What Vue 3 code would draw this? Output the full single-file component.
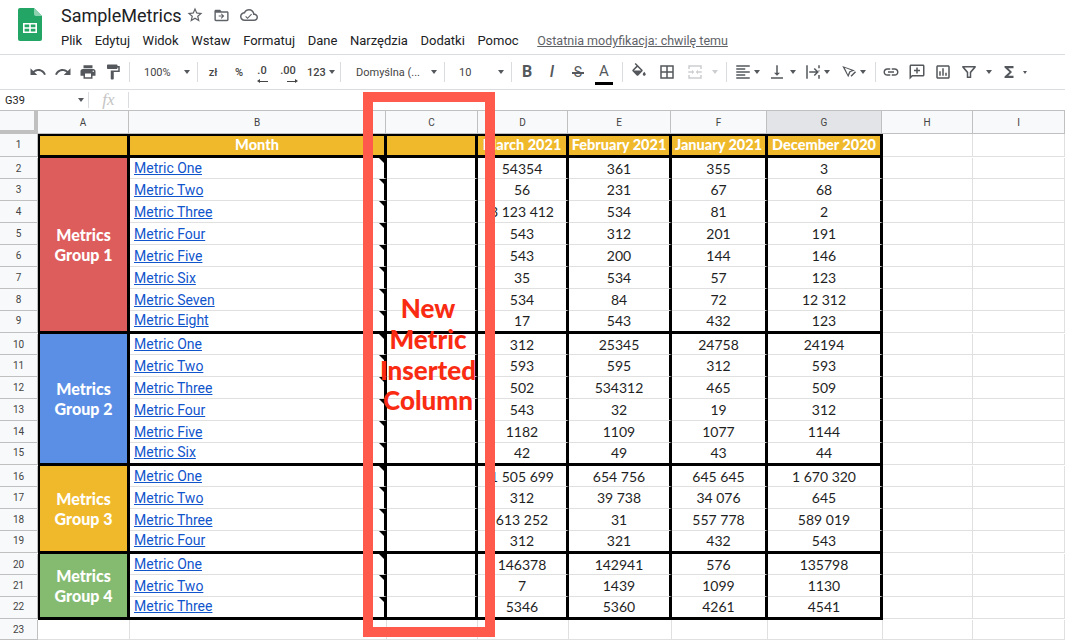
<script setup>
const P = {
  undo: 'M12.5 8c-2.65 0-5.05.99-6.9 2.6L2 7v9h9l-3.62-3.62c1.39-1.16 3.16-1.88 5.12-1.88 3.54 0 6.55 2.31 7.6 5.5l2.37-.78C21.08 11.03 17.15 8 12.5 8z',
  redo: 'M18.4 10.6C16.55 8.99 14.15 8 11.5 8c-4.65 0-8.58 3.03-9.96 7.22L3.9 16c1.05-3.19 4.05-5.5 7.6-5.5 1.95 0 3.73.72 5.12 1.88L13 16h9V7l-3.6 3.6z',
  print: 'M19 8H5c-1.66 0-3 1.34-3 3v6h4v4h12v-4h4v-6c0-1.66-1.34-3-3-3zm-3 11H8v-5h8v5zm3-7c-.55 0-1-.45-1-1s.45-1 1-1 1 .45 1 1-.45 1-1 1zm-1-9H6v4h12V3z',
  paint: 'M18 4V3c0-.55-.45-1-1-1H5c-.55 0-1 .45-1 1v4c0 .55.45 1 1 1h12c.55 0 1-.45 1-1V6h1v4H9v11c0 .55.45 1 1 1h2c.55 0 1-.45 1-1v-9h8V4h-3z',
  fill: 'M16.56 8.94L7.62 0 6.21 1.41l2.38 2.38-5.15 5.15c-.59.59-.59 1.54 0 2.12l5.5 5.5c.29.29.68.44 1.06.44s.77-.15 1.06-.44l5.5-5.5c.59-.58.59-1.53 0-2.12zM5.21 10L10 5.21 14.79 10H5.21zM19 11.5s-2 2.17-2 3.5c0 1.1.9 2 2 2s2-.9 2-2c0-1.33-2-3.5-2-3.5z',
  borders: 'M3 3v18h18V3H3zm8 16H5v-6h6v6zm0-8H5V5h6v6zm8 8h-6v-6h6v6zm0-8h-6V5h6v6z',
  merge: 'M3 3h18v5h-2V5H5v3H3zM3 16h2v3h14v-3h2v5H3zM3 11h5V9l3 3-3 3v-2H3zM21 11h-5V9l-3 3 3 3v-2h5z',
  align: 'M15 15H3v2h12v-2zm0-8H3v2h12V7zM3 13h18v-2H3v2zm0 8h18v-2H3v2zM3 3v2h18V3H3z',
  valign: 'M16 13h-3V3h-2v10H8l4 4 4-4zM4 19v2h16v-2H4z',
  wrap: 'M3 3h2v18H3zM19 3h2v4h-2zM19 10h2v1h-2zM19 16h2v5h-2zM7 11h9l-3-3 1.4-1.4 5.4 5.4-5.4 5.4L13 16l3-3H7z',
  rotate: 'M3 4l17 6-6 2-3 7zM6.4 6.4l4.2 9 1.9-4.5 3-1zM14 17l6-6 1.4 1.4-6 6z',
  link: 'M3.9 12c0-1.71 1.39-3.1 3.1-3.1h4V7H7c-2.76 0-5 2.24-5 5s2.24 5 5 5h4v-1.9H7c-1.71 0-3.1-1.39-3.1-3.1zM8 13h8v-2H8v2zm9-6h-4v1.9h4c1.71 0 3.1 1.39 3.1 3.1s-1.39 3.1-3.1 3.1h-4V17h4c2.76 0 5-2.24 5-5s-2.24-5-5-5z',
  comment: 'M20 2H4c-1.1 0-2 .9-2 2v18l4-4h14c1.1 0 2-.9 2-2V4c0-1.1-.9-2-2-2zm0 14H5.2L4 17.2V4h16v12zM11 6h2v3h3v2h-3v3h-2v-3H8V9h3z',
  chart: 'M19 3H5c-1.1 0-2 .9-2 2v14c0 1.1.9 2 2 2h14c1.1 0 2-.9 2-2V5c0-1.1-.9-2-2-2zm0 16H5V5h14v14zM7 11h2v6H7zM11 7h2v10h-2zM15 13h2v4h-2z',
  filter: 'M3 4h18v2l-6 7v7h-6v-7L3 6zm3 2l5 6v6h2v-6l5-6z',
  sigma: 'M18 4H6v2l6.5 6L6 18v2h12v-3h-7l5-5-5-5h7z',
}

const tools = [
  { w: 25, icon: 'undo' }, { w: 25, icon: 'redo' }, { w: 25, icon: 'print' }, { w: 25, icon: 'paint' },
  { sep: true, m: 4 },
  { w: 67, text: '100%', caret: true, pad: 14 },
  { sep: true },
  { w: 30, text: 'zł', bold: true }, { w: 22, text: '%', bold: true },
  { w: 24, dec: '.0', arrow: 'left' }, { w: 28, dec: '.00', arrow: 'right' },
  { w: 38, text: '123', caret: true, bold: true, g: 3 },
  { sep: true },
  { w: 103, text: 'Domyślna (...', caret: true, pad: 15 },
  { sep: true },
  { w: 66, text: '10', caret: true, pad: 14 },
  { sep: true },
  { w: 30, glyph: 'B', cls: 'g-b' }, { w: 20, glyph: 'I', cls: 'g-i' }, { w: 32, glyph: 'S', cls: 'g-s' }, { w: 20, glyph: 'A', cls: 'g-a' },
  { sep: true, m: 8 },
  { w: 32, icon: 'fill' }, { w: 23, icon: 'borders' }, { w: 48, icon: 'merge', off: true, caret: true, g: 7.5 },
  { sep: true },
  { w: 40, icon: 'align', caret: true, g: 2.5 }, { w: 30, icon: 'valign', caret: true, g: 3.5 },
  { w: 40, icon: 'wrap', caret: true, g: 2.5 }, { w: 32, icon: 'rotate', caret: true, g: 2 },
  { sep: true, m: 6 },
  { w: 30, icon: 'link' }, { w: 22, icon: 'comment' }, { w: 30, icon: 'chart' },
  { w: 36, icon: 'filter', caret: true, g: 7.5 }, { w: 39, icon: 'sigma', caret: true, small: true, g: 5 },
]

const menu = ['Plik', 'Edytuj', 'Widok', 'Wstaw', 'Formatuj', 'Dane', 'Narzędzia', 'Dodatki', 'Pomoc']
const colHeads = ['A', 'B', 'C', 'D', 'E', 'F', 'G', 'H', 'I']
const months = ['March 2021', 'February 2021', 'January 2021', 'December 2020']

const rows = [
  { n: 2, group: { cls: 'red', span: 8, a: 'Metrics', b: 'Group 1' }, m: 'Metric One', v: ['54354', '361', '355', '3'] },
  { n: 3, m: 'Metric Two', v: ['56', '231', '67', '68'] },
  { n: 4, m: 'Metric Three', v: ['3 123 412', '534', '81', '2'] },
  { n: 5, m: 'Metric Four', v: ['543', '312', '201', '191'] },
  { n: 6, m: 'Metric Five', v: ['543', '200', '144', '146'] },
  { n: 7, m: 'Metric Six', v: ['35', '534', '57', '123'] },
  { n: 8, m: 'Metric Seven', v: ['534', '84', '72', '12 312'] },
  { n: 9, end: true, m: 'Metric Eight', v: ['17', '543', '432', '123'] },
  { n: 10, group: { cls: 'blue', span: 6, a: 'Metrics', b: 'Group 2' }, m: 'Metric One', v: ['312', '25345', '24758', '24194'] },
  { n: 11, m: 'Metric Two', v: ['593', '595', '312', '593'] },
  { n: 12, m: 'Metric Three', v: ['502', '534312', '465', '509'] },
  { n: 13, m: 'Metric Four', v: ['543', '32', '19', '312'] },
  { n: 14, m: 'Metric Five', v: ['1182', '1109', '1077', '1144'] },
  { n: 15, end: true, m: 'Metric Six', v: ['42', '49', '43', '44'] },
  { n: 16, group: { cls: 'yellow', span: 4, a: 'Metrics', b: 'Group 3' }, m: 'Metric One', v: ['1 505 699', '654 756', '645 645', '1 670 320'] },
  { n: 17, m: 'Metric Two', v: ['312', '39 738', '34 076', '645'] },
  { n: 18, m: 'Metric Three', v: ['613 252', '31', '557 778', '589 019'] },
  { n: 19, end: true, m: 'Metric Four', v: ['312', '321', '432', '543'] },
  { n: 20, group: { cls: 'green', span: 3, a: 'Metrics', b: 'Group 4' }, m: 'Metric One', v: ['146378', '142941', '576', '135798'] },
  { n: 21, m: 'Metric Two', v: ['7', '1439', '1099', '1130'] },
  { n: 22, end: true, m: 'Metric Three', v: ['5346', '5360', '4261', '4541'] },
]
const blanks = [1, 2, 3, 4, 5, 6, 7, 8, 9]
</script>

<template>
  <div class="app">
    <header class="top">
      <svg class="logo" viewBox="0 0 24 33" width="24" height="33">
        <path d="M2 0h14l8 8v23a2 2 0 0 1-2 2H2a2 2 0 0 1-2-2V2a2 2 0 0 1 2-2z" fill="#23a566" />
        <path d="M16 0v6a2 2 0 0 0 2 2h6z" fill="#8ed1b1" />
        <path d="M5 15h14v10H5zm1.6 1.6v2.6h4.6v-2.6zm6.2 0v2.6h4.6v-2.6zm-6.2 4.2v2.6h4.6v-2.6zm6.2 0v2.6h4.6v-2.6z" fill="#fff" fill-rule="evenodd" />
      </svg>
      <div class="titles">
        <div class="title-row">
          <span class="doc">SampleMetrics</span>
          <svg class="t-star" viewBox="0 0 24 24" width="18" height="18"><path fill="#5f6368" d="M22 9.24l-7.19-.62L12 2 9.19 8.63 2 9.24l5.46 4.73L5.82 21 12 17.27 18.18 21l-1.63-7.03L22 9.24zM12 15.4l-3.76 2.27 1-4.28-3.32-2.88 4.38-.38L12 6.1l1.71 4.04 4.38.38-3.32 2.88 1 4.28L12 15.4z" /></svg>
          <svg class="t-folder" viewBox="0 0 24 24" width="17" height="17"><path fill="#5f6368" d="M20 6h-8l-2-2H4c-1.1 0-2 .9-2 2v12c0 1.1.9 2 2 2h16c1.1 0 2-.9 2-2V8c0-1.1-.9-2-2-2zm0 12H4V8h16v10zM12 9l-1 1 2 2H8v1.5h5l-2 2 1 1 4-3.8z" /></svg>
          <svg class="t-cloud" viewBox="0 0 24 24" width="18" height="18"><path fill="#5f6368" d="M19.35 10.04C18.67 6.59 15.64 4 12 4 9.11 4 6.6 5.64 5.35 8.04 2.34 8.36 0 10.91 0 14c0 3.31 2.69 6 6 6h13c2.76 0 5-2.24 5-5 0-2.64-2.05-4.78-4.65-4.96zM19 18H6c-2.21 0-4-1.79-4-4s1.79-4 4-4h.71C7.37 7.69 9.48 6 12 6c3.04 0 5.5 2.46 5.5 5.5v.5H19c1.66 0 3 1.34 3 3s-1.34 3-3 3zM10 15.2l-2-2-1 1 3 3 6-6-1-1z" /></svg>
        </div>
        <nav class="menu">
          <span v-for="m in menu" :key="m">{{ m }}</span>
          <span class="edited">Ostatnia modyfikacja: chwilę temu</span>
        </nav>
      </div>
    </header>

    <div class="toolbar">
      <template v-for="(t, i) in tools" :key="i">
        <span v-if="t.sep" class="sep" :class="t.m ? 'sep-m' + t.m : ''"></span>
        <span v-else class="tool" :style="{ width: t.w + 'px' }" :class="{ off: t.off }">
          <svg v-if="t.icon" viewBox="0 0 24 24" width="18" height="18"><path :d="P[t.icon]" fill-rule="evenodd" /></svg>
          <span v-if="t.text" class="ttext" :class="{ bold: t.bold }" :style="t.pad ? { marginLeft: t.pad + 'px' } : {}">{{ t.text }}</span>
          <span v-if="t.dec" class="dec">{{ t.dec }}<i :class="t.arrow"></i></span>
          <span v-if="t.glyph" class="glyph" :class="t.cls">{{ t.glyph }}</span>
          <span v-if="t.caret" class="caret" :class="{ small: t.small, far: t.pad }" :style="t.g ? { marginLeft: t.g + 'px' } : {}"></span>
        </span>
      </template>
    </div>

    <div class="fbar">
      <div class="namebox">G39<span class="caret"></span></div>
      <span class="fx">fx</span>
    </div>

    <div class="colheads">
      <div class="corner"></div>
      <div v-for="c in colHeads" :key="c" class="ch" :class="{ sel: c === 'G' }">{{ c }}</div>
    </div>

    <div class="sheet">
      <div class="rh end">1</div>
      <div class="c t head first"></div>
      <div class="c t head">Month</div>
      <div class="c t head"></div>
      <div v-for="m in months" :key="m" class="c t head">{{ m }}</div>
      <div class="c plain end"></div>
      <div class="c plain end"></div>

      <template v-for="r in rows" :key="r.n">
        <div class="rh" :class="{ end: r.end }">{{ r.n }}</div>
        <div v-if="r.group" class="c t grp first" :class="r.group.cls" :style="{ gridRow: 'span ' + r.group.span }">
          <span>{{ r.group.a }}</span><span>{{ r.group.b }}</span>
        </div>
        <div class="c t metric" :class="{ last: r.end }"><a href="#">{{ r.m }}</a></div>
        <div class="c t" :class="{ last: r.end }"></div>
        <div v-for="(v, i) in r.v" :key="i" class="c t num" :class="{ last: r.end }">{{ v }}</div>
        <div class="c plain" :class="{ end: r.end }"></div>
        <div class="c plain" :class="{ end: r.end }"></div>
      </template>

      <div class="rh">23</div>
      <div v-for="b in blanks" :key="b" class="c plain"></div>
    </div>

    <div class="callout">
      <span>New</span><span>Metric</span><span>Inserted</span><span>Column</span>
    </div>
  </div>
</template>

<style>
html, body { margin: 0; overflow: hidden; background: #fff; }
</style>

<style scoped>
.app { position: relative; width: 1065px; height: 640px; overflow: hidden; background: #fff; font-family: Roboto, "Liberation Sans", sans-serif; }
.top { height: 55px; box-sizing: border-box; border-bottom: 1px solid #dadce0; display: flex; padding: 8px 0 0 18px; }
.logo { flex: none; }
.titles { margin-left: 19px; margin-top: -3px; }
.title-row { display: flex; align-items: center; height: 20px; }
.doc { font-size: 18px; color: #202124; width: 125px; }
.t-folder { margin-left: 9px; }
.t-cloud { margin-left: 10px; }
.menu { display: flex; gap: 12.6px; font-size: 13px; color: #202124; margin-top: 7px; line-height: 18px; }
.edited { color: #5f6368; font-size: 12.5px; text-decoration: underline; margin-left: 6px; }

.toolbar { height: 35px; box-sizing: border-box; border-bottom: 1px solid #dadce0; display: flex; align-items: center; padding-left: 25px; }
.sep { width: 1px; height: 20px; background: #dadce0; flex: none; }
.sep-m4 { margin-left: 4px; }
.sep-m6 { margin-left: 6px; }
.sep-m8 { margin-left: 8px; }
.tool { display: flex; align-items: center; justify-content: center; flex: none; height: 24px; position: relative; }
.tool svg { fill: #54585c; flex: none; }
.tool.off svg { fill: #ccced0; }
.tool.off .caret { border-top-color: #ccced0; }
.ttext { font-size: 11px; color: #444; }
.ttext.bold { font-weight: 500; }
.ttext + .caret { margin-left: 5px; }
.caret { display: inline-block; width: 0; height: 0; border: 3.5px solid transparent; border-top: 4px solid #54585c; border-bottom: 0; margin-left: 4px; flex: none; }
.caret.small { border-width: 2px; border-top-width: 3px; border-bottom: 0; }
.ttext + .caret.far { margin-left: auto; margin-right: 7px; }
.dec { font-size: 11px; font-weight: 500; color: #444; position: relative; top: -2px; }
.dec i { position: absolute; left: 3px; bottom: -5px; width: 8px; height: 1px; background: #444; }
.dec i.right { left: 7px; }
.dec i::after { content: ""; position: absolute; top: -2px; border: 2.5px solid transparent; }
.dec i.left::after { left: -3px; border-right: 3px solid #444; border-left: 0; }
.dec i.right::after { right: -3px; border-left: 3px solid #444; border-right: 0; }
.glyph { color: #54585c; font-size: 16px; line-height: 20px; position: relative; }
.g-b { font-weight: 700; }
.g-i { font-style: italic; font-weight: 500; }
.g-s { font-size: 14px; }
.g-s::after { content: ""; position: absolute; left: -2px; right: -2px; top: 10px; height: 1.5px; background: #54585c; }
.g-a { font-size: 15px; padding-bottom: 3px; width: 18px; text-align: center; }
.g-a::after { content: ""; position: absolute; left: 0; right: 0; bottom: -1px; height: 3px; background: #000; }

.fbar { height: 21px; box-sizing: border-box; border-bottom: 1px solid #c0c0c0; display: flex; align-items: center; }
.namebox { width: 89px; height: 16px; box-sizing: border-box; border-right: 1px solid #dadce0; font-size: 11px; color: #222; padding-left: 5px; padding-right: 4px; display: flex; align-items: center; justify-content: space-between; }
.fx { font-family: "Liberation Serif", serif; font-style: italic; font-size: 17px; color: #c4c4c4; width: 40px; height: 16px; line-height: 15px; text-align: center; box-sizing: border-box; border-right: 1px solid #dadce0; }

.colheads { display: grid; grid-template-columns: 38px 91px 257px 92px 90px 103px 96px 115px 91px 92px; height: 23px; }
.corner { background: #f8f9fa; box-sizing: border-box; border-right: 4px solid #c0c0c0; border-bottom: 4px solid #c0c0c0; }
.ch { background: #f8f9fa; font-size: 10px; color: #444; display: flex; align-items: center; justify-content: center; box-sizing: border-box; border-right: 1px solid #c0c0c0; border-bottom: 1px solid #c0c0c0; }
.ch.sel { background: #e3e4e7; }

.sheet { display: grid; grid-template-columns: 38px 92px 257px 91px 91px 103px 96px 115px 90px 92px;
  grid-template-rows: 24px 21px repeat(6, 22px) 23px 21px repeat(4, 22px) 23px 21px 22px 22px 23px 21px 22px 23px 20px;
  background: linear-gradient(#f8f9fa, #f8f9fa) 0 0 / 38px 100% no-repeat; }
.rh { background: #f8f9fa; font-size: 10px; color: #444; display: flex; align-items: center; justify-content: center; box-sizing: border-box; border-right: 1px solid #c0c0c0; border-bottom: 1px solid #c0c0c0; }
.rh.end { margin-bottom: 1px; padding-bottom: 2px; }
.c { box-sizing: border-box; min-width: 0; border-bottom: 1px solid #e0e0e0; display: flex; align-items: center; justify-content: center; white-space: nowrap; overflow: hidden; }
.plain { border-right: 1px solid #e0e0e0; }
.plain.end { margin-bottom: 1px; }
.t { border-right: 3px solid #000; }
.t.last { border-bottom: 3px solid #000; padding-bottom: 2px; }
.head { background: #efb92b; color: #fff; font: 900 14.5px Lato, sans-serif; border-top: 2px solid #000; border-bottom: 3px solid #000; padding-bottom: 2px; }
.first { border-left: 2px solid #000; }
.grp { flex-direction: column; color: #fff; font: 900 16px/20px Lato, sans-serif; border-bottom: 3px solid #000; }
.red { background: #dd5c5c; }
.blue { background: #5b8fe6; }
.yellow { background: #efb92b; }
.green { background: #85bb71; }
.metric { justify-content: flex-start; padding-left: 4px; position: relative; font-size: 14px; }
.metric a { color: #1155cc; text-decoration: underline; }
.metric::after { content: ""; position: absolute; top: 0; right: 0; border-top: 5px solid #000; border-left: 5px solid transparent; }
.num { font: 400 14px Lato, sans-serif; color: #1f1f1f; }

.callout { position: absolute; left: 363px; top: 92px; width: 132px; height: 545px; box-sizing: border-box; border: 10px solid #ff5a4b; display: flex; flex-direction: column; align-items: center; justify-content: center; padding: 0 2px 20px 0; color: #f92b12; font: 900 26px/30.7px Lato, sans-serif; }
</style>
